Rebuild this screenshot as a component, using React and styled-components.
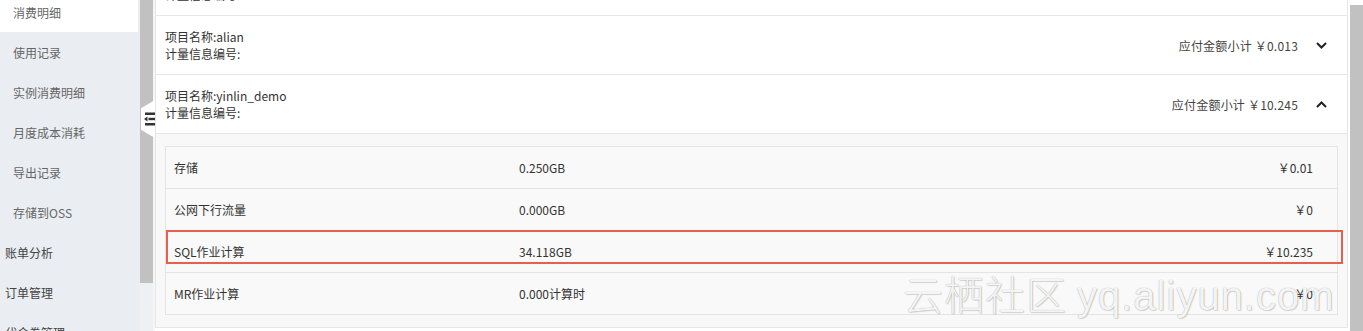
import React from "react";
import styled, { createGlobalStyle } from "styled-components";

const Global = createGlobalStyle`
  html, body { margin: 0; padding: 0; background: #fff; }
  body { font-family: "Noto Sans CJK SC", "Noto Sans", sans-serif; font-size: 12px; color: #333; }
  #root { width: 1363px; height: 331px; overflow: hidden; }
`;

const Page = styled.div`
  position: relative;
  display: flex;
  width: 1363px;
  height: 331px;
  overflow: hidden;
`;

const Sidebar = styled.nav`
  width: 140px;
  flex: none;
  background: #eaedf1;
  display: flex;
  flex-direction: column;
`;

const SideList = styled.ul`
  list-style: none;
  margin: -8px 0 0;
  padding: 0;
`;

const SideItem = styled.li`
  height: 40px;
  display: flex;
  align-items: center;
  padding-left: ${(p) => (p.$top ? "5px" : "13px")};
  margin-right: 2px;
  background: ${(p) => (p.$active ? "#fff" : "transparent")};
  color: ${(p) => (p.$top ? "#444" : "#666")};
  font-size: 12px;
`;

const SideScroll = styled.div`
  width: 15px;
  flex: none;
  background: #eef0f3;
  display: flex;
  box-shadow: inset -2px 0 0 #f6f6f6;
`;

const SideThumb = styled.div`
  width: 13px;
  height: 283px;
  background: #c1c1c1;
`;

const CollapseTab = styled.div`
  position: absolute;
  left: 141px;
  top: 100px;
  width: 14px;
  height: 38px;
  background: #fff;
  clip-path: polygon(100% 0, 0 22%, 0 78%, 100% 100%);
  display: flex;
  align-items: center;
  justify-content: flex-end;
`;

const Main = styled.main`
  flex: 1;
  min-width: 0;
  background: #fff;
  display: flex;
  flex-direction: column;
`;

const Card = styled.div`
  margin-top: -43px;
  border-left: 1px solid #e6e6e6;
  border-right: 1px solid #e6e6e6;
  background: #fff;
`;

const Head = styled.div`
  height: 58px;
  border-bottom: 1px solid #e6e6e6;
  display: flex;
  align-items: center;
  justify-content: space-between;
  padding: 0 20px 0 9px;
`;

const HeadInfo = styled.div`
  display: flex;
  flex-direction: column;
  line-height: 17px;
  color: #333;
`;

const HeadRight = styled.div`
  display: flex;
  align-items: center;
  gap: 18px;
  color: #444;
`;

const Amount = styled.span`
  letter-spacing: 0.2px;
`;

const Detail = styled.div`
  background: #f8f8f8;
  padding: 12px 9px 12px;
  border-bottom: 1px solid #e6e6e6;
`;

const Table = styled.div`
  border: 1px solid #e4e4e4;
  background: #f9f9f9;
`;

const Row = styled.div`
  position: relative;
  height: 41px;
  display: grid;
  grid-template-columns: 345px 1fr auto;
  align-items: center;
  padding: 0 24px 0 8px;
  border-top: ${(p) => (p.$first ? "none" : "1px solid #e4e4e4")};
  color: #333;
`;

const Highlight = styled.div`
  position: absolute;
  left: 0;
  right: -6px;
  top: -1px;
  height: 34px;
  border: 2px solid #e7604e;
  box-sizing: border-box;
  pointer-events: none;
`;

const RightScroll = styled.div`
  width: 15px;
  flex: none;
  background: #fff;
  display: flex;
  justify-content: flex-end;
  padding-top: 5px;
  box-sizing: border-box;
`;

const RightThumb = styled.div`
  width: 13px;
  height: 100%;
  background: #c1c1c1;
`;

const Watermark = styled.div`
  position: absolute;
  left: 903px;
  top: 268px;
  font-family: "Noto Sans CJK SC", "Liberation Sans", sans-serif;
  font-size: 40px;
  line-height: 50px;
  white-space: nowrap;
  color: rgba(255, 255, 255, 0.92);
  text-shadow: 0 0 1px rgba(0, 0, 0, 0.4), 1px 1px 1px rgba(0, 0, 0, 0.12);
  font-weight: 300;
  letter-spacing: 1px;
  pointer-events: none;
`;

const Latin = styled.span`
  font-family: "Liberation Sans", sans-serif;
  margin-left: 10px;
`;

const Chevron = ({ up }) => (
  <svg width="11" height="7" viewBox="0 0 11 7">
    <polyline
      points={up ? "1,6 5.5,1.5 10,6" : "1,1 5.5,5.5 10,1"}
      fill="none"
      stroke="#222"
      strokeWidth="2"
    />
  </svg>
);

const OutdentIcon = () => (
  <svg width="11" height="14" viewBox="0 0 11 14">
    <rect x="1" y="0.5" width="10" height="2.5" fill="#333" />
    <rect x="4.5" y="5.8" width="6.5" height="2.4" fill="#333" />
    <rect x="1" y="11" width="10" height="2.5" fill="#333" />
    <polygon points="0,7 3.5,4.6 3.5,9.4" fill="#333" />
  </svg>
);

const sideItems = [
  { label: "消费明细", active: true },
  { label: "使用记录" },
  { label: "实例消费明细" },
  { label: "月度成本消耗" },
  { label: "导出记录" },
  { label: "存储到OSS" },
  { label: "账单分析", top: true },
  { label: "订单管理", top: true },
  { label: "代金券管理", top: true },
];

const projects = [
  { name: "", amount: "", hiddenTop: true },
  { name: "alian", amount: "￥0.013" },
  { name: "yinlin_demo", amount: "￥10.245", open: true },
];

const details = [
  { item: "存储", usage: "0.250GB", cost: "￥0.01" },
  { item: "公网下行流量", usage: "0.000GB", cost: "￥0" },
  { item: "SQL作业计算", usage: "34.118GB", cost: "￥10.235", mark: true },
  { item: "MR作业计算", usage: "0.000计算时", cost: "￥0" },
];

export default function App() {
  return (
    <Page>
      <Global />
      <Sidebar>
        <SideList>
          {sideItems.map((s) => (
            <SideItem key={s.label} $active={s.active} $top={s.top}>
              {s.label}
            </SideItem>
          ))}
        </SideList>
      </Sidebar>
      <SideScroll>
        <SideThumb />
      </SideScroll>
      <CollapseTab>
        <OutdentIcon />
      </CollapseTab>
      <Main>
        <Card>
          {projects.map((p, i) => (
            <React.Fragment key={i}>
              <Head>
                <HeadInfo>
                  <span>项目名称:{p.name}</span>
                  <span>计量信息编号:</span>
                </HeadInfo>
                {!p.hiddenTop && (
                  <HeadRight>
                    <Amount>应付金额小计 {p.amount}</Amount>
                    <Chevron up={p.open} />
                  </HeadRight>
                )}
              </Head>
              {p.open && (
                <Detail>
                  <Table>
                    {details.map((d, j) => (
                      <Row key={d.item} $first={j === 0}>
                        <span>{d.item}</span>
                        <span>{d.usage}</span>
                        <span>{d.cost}</span>
                        {d.mark && <Highlight />}
                      </Row>
                    ))}
                  </Table>
                </Detail>
              )}
            </React.Fragment>
          ))}
        </Card>
      </Main>
      <RightScroll>
        <RightThumb />
      </RightScroll>
      <Watermark>
        云栖社区<Latin>yq.aliyun.com</Latin>
      </Watermark>
    </Page>
  );
}
